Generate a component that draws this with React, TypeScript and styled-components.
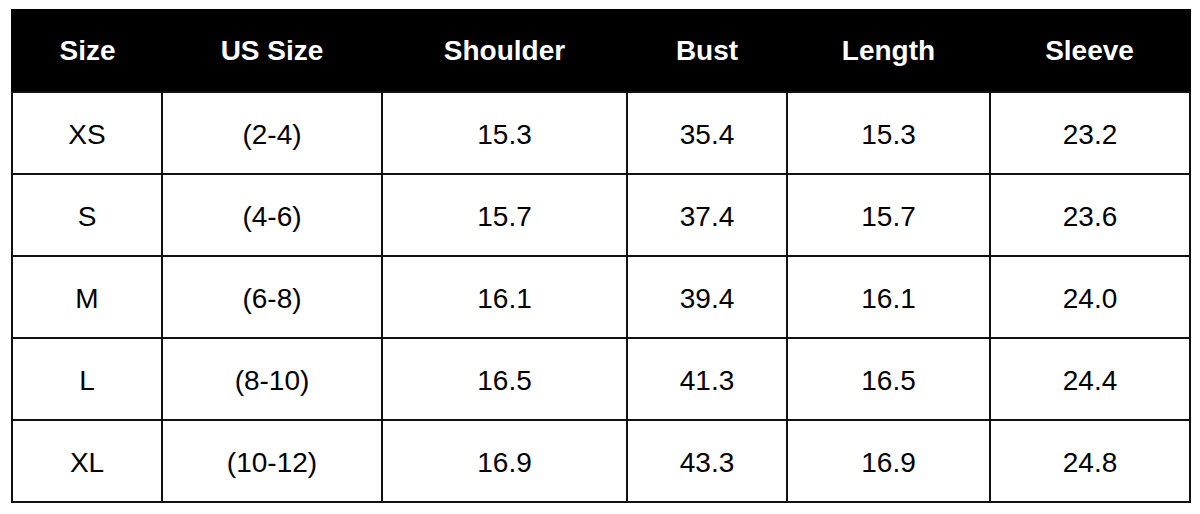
import styled, { createGlobalStyle } from 'styled-components';

const GlobalStyle = createGlobalStyle`
  body {
    margin: 0;
    background: #ffffff;
    font-family: "Liberation Sans", Arial, sans-serif;
  }
`;

const ChartWrapper = styled.div`
  padding: 9px 11px 0 11px;
`;

const SizeTable = styled.table`
  width: 1178px;
  border-collapse: collapse;
  table-layout: fixed;
  border: 2px solid #000;
`;

const HeadCell = styled.th`
  height: 80px;
  padding: 0;
  background: #000;
  color: #fff;
  font-size: 28px;
  font-weight: 700;
  text-align: center;
  vertical-align: middle;
`;

const BodyCell = styled.td`
  height: 77px;
  padding: 3px 0 0;
  border: 2px solid #111;
  color: #000;
  font-size: 28px;
  text-align: center;
  vertical-align: middle;
`;

interface SizeRow {
  size: string;
  us: string;
  shoulder: string;
  bust: string;
  length: string;
  sleeve: string;
}

const columns = [
  { label: 'Size', width: 150 },
  { label: 'US Size', width: 220 },
  { label: 'Shoulder', width: 245 },
  { label: 'Bust', width: 160 },
  { label: 'Length', width: 203 },
  { label: 'Sleeve', width: 200 },
];

const rows: SizeRow[] = [
  { size: 'XS', us: '(2-4)', shoulder: '15.3', bust: '35.4', length: '15.3', sleeve: '23.2' },
  { size: 'S', us: '(4-6)', shoulder: '15.7', bust: '37.4', length: '15.7', sleeve: '23.6' },
  { size: 'M', us: '(6-8)', shoulder: '16.1', bust: '39.4', length: '16.1', sleeve: '24.0' },
  { size: 'L', us: '(8-10)', shoulder: '16.5', bust: '41.3', length: '16.5', sleeve: '24.4' },
  { size: 'XL', us: '(10-12)', shoulder: '16.9', bust: '43.3', length: '16.9', sleeve: '24.8' },
];

const App = () => {
  return (
    <ChartWrapper>
      <GlobalStyle />
      <SizeTable>
        <colgroup>
          {columns.map((c) => (
            <col key={c.label} style={{ width: c.width }} />
          ))}
        </colgroup>
        <thead>
          <tr>
            {columns.map((c) => (
              <HeadCell key={c.label}>{c.label}</HeadCell>
            ))}
          </tr>
        </thead>
        <tbody>
          {rows.map((r) => (
            <tr key={r.size}>
              <BodyCell>{r.size}</BodyCell>
              <BodyCell>{r.us}</BodyCell>
              <BodyCell>{r.shoulder}</BodyCell>
              <BodyCell>{r.bust}</BodyCell>
              <BodyCell>{r.length}</BodyCell>
              <BodyCell>{r.sleeve}</BodyCell>
            </tr>
          ))}
        </tbody>
      </SizeTable>
    </ChartWrapper>
  );
};

export default App;
